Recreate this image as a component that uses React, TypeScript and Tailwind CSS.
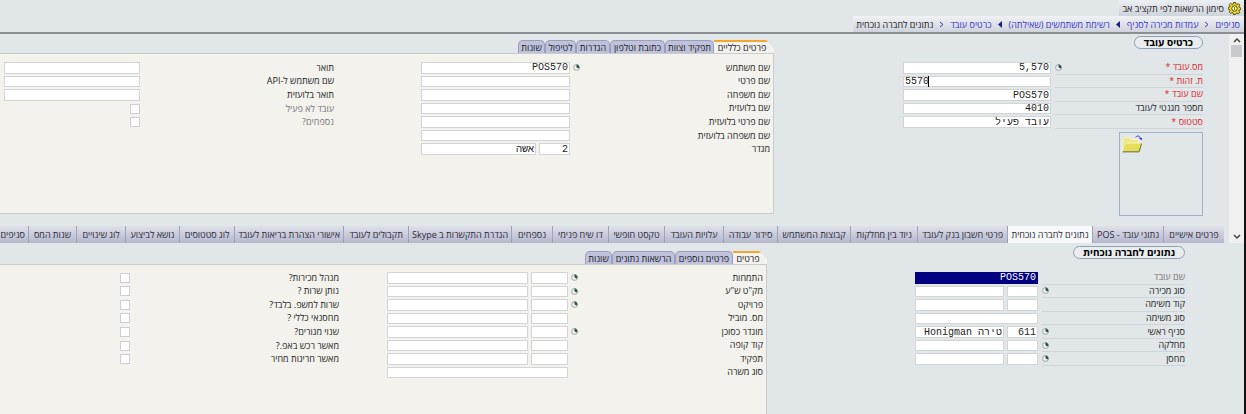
import { useId, type ReactNode } from "react";
import clsx from "clsx";

type Part = { w: string; value?: string; selected?: boolean; ltr?: boolean };
type Row = {
  label: string;
  parts?: Part[];
  lookup?: boolean;
  tone?: "required" | "muted";
};

function LookupIcon() {
  return (
    <svg viewBox="0 0 12 12" className="size-[7px] shrink-0" aria-hidden="true">
      <circle cx="6" cy="6" r="5" fill="#eef3f0" stroke="#8b9794" strokeWidth="1.4" />
      <path d="M6 6V1a5 5 0 0 1 4.6 6.6z" fill="#2c4f46" />
    </svg>
  );
}

function GearIcon() {
  return (
    <svg viewBox="0 0 26 26" className="size-[13px] shrink-0" aria-hidden="true">
      <path
        d="M11 1h4l.8 3.2 2 .8 2.9-1.7 2.8 2.8L21.800 9l.8 2 2.900.8v3.400l-2.900.8-.8 2 1.700 3-2.800 2.700-2.900-1.700-2 .8L15 25h-4l-.8-3.200-2-.8-2.900 1.700-2.800-2.700 1.700-3-.8-2-2.900-.8v-3.400l2.900-.8.8-2-1.700-2.900 2.800-2.800L8.200 5l2-.8z"
        fill="#f2e21c"
        stroke="#2f2b06"
        strokeWidth="1.600"
      />
      <circle cx="13" cy="13" r="5.500" fill="#fbf7b0" stroke="#3a3508" strokeWidth="1.800" />
      <path d="M13 10v6" stroke="#8a7d10" strokeWidth="2" />
    </svg>
  );
}

function FolderIcon() {
  return (
    <svg viewBox="0 0 60 54" className="h-[18px] w-[20px]" aria-hidden="true">
      <path d="M2 48V14l6-7h14l5 6h22v10z" fill="#ece98a" stroke="#fbfae0" strokeWidth="2" />
      <path d="M2 50 13 24h46l-8 26z" fill="#e3de5c" />
      <path d="M13 24h46" stroke="#f8f6c4" strokeWidth="3" />
      <path d="M2 50.500h49l8-25" fill="none" stroke="#6f6b2c" strokeWidth="3" />
      <path d="M41 6c6-5 12-3 15 4" fill="none" stroke="#2b35d8" strokeWidth="3" />
      <path d="M50 9h10v7z" fill="#2b35d8" />
    </svg>
  );
}

function Chevron({ up }: { up?: boolean }) {
  return (
    <svg viewBox="0 0 8 6" className="h-[6px] w-[8px]" aria-hidden="true">
      <path d={up ? "M1 5l3-3 3 3" : "M1 1l3 3 3-3"} fill="none" stroke="#444" strokeWidth="1.500" />
    </svg>
  );
}

function Field({ row, labelW, gap }: { row: Row; labelW: string; gap: string }) {
  const id = useId();
  const ruled = labelW === "w-[148px]" || labelW === "w-[143px]";
  return (
    <div className={clsx("flex items-stretch", gap)}>
      <div
        className={clsx(
          "flex shrink-0 items-center justify-between",
          labelW,
          ruled && "border-b border-[#cfd4d7]",
        )}
      >
        <label
          htmlFor={id}
          className={clsx(
            "whitespace-nowrap text-[9px] leading-[12px] font-medium",
            row.tone === "required" ? "text-[#d8262c]" : row.tone === "muted" ? "text-[#777]" : "text-[#1c1c1c]",
          )}
        >
          {row.label}
        </label>
        {row.lookup && <LookupIcon />}
      </div>
      {row.parts ? (
        <div className="flex gap-[3px] py-px">
          {row.parts.map((p, i) => (
            <div key={i} className={clsx("relative flex", p.w)}>
              <input
                id={i === 0 ? id : undefined}
                aria-label={i === 0 ? undefined : row.label}
                defaultValue={p.value}
                dir={p.ltr ? "ltr" : "rtl"}
                className={clsx(
                  "h-full w-full border px-px font-['Liberation_Mono',monospace] text-[10px] leading-[10px] outline-none",
                  p.selected
                    ? "border-[#000080] bg-[#000080] text-white"
                    : "border-[#d2d4d6] bg-white text-[#222]",
                )}
              />
              {p.ltr && <span className="absolute top-0 left-[25px] h-full w-px bg-black" />}
            </div>
          ))}
        </div>
      ) : (
        <input
          id={id}
          type="checkbox"
          className="size-[10px] self-center appearance-none border border-[#cfcdd3] bg-white"
        />
      )}
    </div>
  );
}

function Fields({ rows, labelW, gap, className }: { rows: Row[]; labelW: string; gap: string; className: string }) {
  return (
    <div className={clsx("grid auto-rows-fr content-stretch", className)}>
      {rows.map((r) => (
        <Field key={r.label} row={r} labelW={labelW} gap={gap} />
      ))}
    </div>
  );
}

function Title({ children }: { children: ReactNode }) {
  return (
    <h2 className="flex h-[13px] items-center justify-center rounded-full border border-[#8fa0b3] bg-[#e9edef] px-[9px] text-[10px] leading-[11px] font-bold whitespace-nowrap text-black">
      {children}
    </h2>
  );
}

function PanelTabs({ tabs }: { tabs: [string, string][] }) {
  return (
    <div className="flex h-[13px] items-stretch">
      {tabs.map(([name, w], i) => (
        <button
          key={name}
          type="button"
          className={clsx(
            "flex items-center justify-center text-[9px] leading-[11px] font-medium whitespace-nowrap text-[#1a1a2a]",
            w,
            i === 0
              ? "border-t-2 border-[#f0a830] bg-[#f3f2ed] pr-1 [clip-path:polygon(0_0,calc(100%-8px)_0,100%_8px,100%_100%,0_100%)]"
              : "rounded-t-[5px] border border-b-0 border-[#9a9dbb] bg-[#bfc2da]",
          )}
        >
          {name}
        </button>
      ))}
    </div>
  );
}

function Crumb({ children }: { children: ReactNode }) {
  return (
    <a href="#" className="text-[#3a34d0]">
      {children}
    </a>
  );
}

function Sep({ solid }: { solid?: boolean }) {
  return (
    <svg viewBox="0 0 5 7" className="h-[7px] w-[5px]" aria-hidden="true">
      {solid ? (
        <path d="M4 0v7L0 3.500z" fill="#1d1d8c" />
      ) : (
        <path d="M1 1l3 2.500L1 6" fill="none" stroke="#3a34b0" />
      )}
    </svg>
  );
}

const full = (w: string, value?: string): Part[] => [{ w, value }];

const cardRows: Row[] = [
  { label: "מס.עובד *", parts: full("w-[148px]", "5,570"), lookup: true, tone: "required" },
  { label: "ת. זהות *", parts: [{ w: "w-[148px]", value: "5570", ltr: true }], tone: "required" },
  { label: "שם עובד *", parts: full("w-[148px]", "POS570"), tone: "required" },
  { label: "מספר מגנטי לעובד", parts: full("w-[148px]", "4010") },
  { label: "סטטוס *", parts: full("w-[148px]", "עובד פעיל"), tone: "required" },
];

const generalRows: Row[] = [
  { label: "שם משתמש", parts: full("w-[149px]", "POS570"), lookup: true },
  { label: "שם פרטי", parts: full("w-[149px]") },
  { label: "שם משפחה", parts: full("w-[149px]") },
  { label: "שם בלועזית", parts: full("w-[149px]") },
  { label: "שם פרטי בלועזית", parts: full("w-[149px]") },
  { label: "שם משפחה בלועזית", parts: full("w-[149px]") },
  { label: "מגדר", parts: [{ w: "w-[31px]", value: "2" }, { w: "w-[115px]", value: "אשה" }] },
];

const extraRows: Row[] = [
  { label: "תואר", parts: full("w-[136px]") },
  { label: "שם משתמש ל-API", parts: full("w-[136px]") },
  { label: "תואר בלועזית", parts: full("w-[136px]") },
  { label: "עובד לא פעיל", tone: "muted" },
  { label: "נספחים?", tone: "muted" },
];

const pair = (a = "", b = ""): Part[] => [
  { w: "w-[31px]", value: a },
  { w: "w-[89px]", value: b },
];

const companyRows: Row[] = [
  { label: "שם עובד", parts: [{ w: "w-[123px]", value: "POS570", selected: true }], tone: "muted" },
  { label: "סוג מכירה", parts: pair(), lookup: true },
  { label: "קוד משימה", parts: pair() },
  { label: "סוג משימה", parts: full("w-[123px]") },
  { label: "סניף ראשי", parts: pair("611", "טירה Honigman"), lookup: true },
  { label: "מחלקה", parts: pair(), lookup: true },
  { label: "מחסן", parts: pair(), lookup: true },
];

const widePair: Part[] = [{ w: "w-[37px]" }, { w: "w-[141px]" }];

const detailRows: Row[] = [
  { label: "התמחות", parts: widePair, lookup: true },
  { label: "מק\"ט ש\"ע", parts: widePair, lookup: true },
  { label: "פרויקט", parts: widePair, lookup: true },
  { label: "מס. מוביל", parts: widePair },
  { label: "מוגדר כסוכן", parts: widePair, lookup: true },
  { label: "קוד קופה", parts: widePair },
  { label: "תפקיד", parts: widePair },
  { label: "סוג משרה", parts: full("w-[181px]") },
];

const flagRows: Row[] = [
  { label: "מנהל מכירות?" },
  { label: "נותן שרות ?" },
  { label: "שרות למשפ. בלבד?" },
  { label: "מחסנאי כללי ?" },
  { label: "שנוי מגורים?" },
  { label: "מאשר רכש באפ.?" },
  { label: "מאשר חריגות מחיר" },
];

const sections: [string, string][] = [
  ["פרטים אישיים", "w-[61px]"],
  ["נתוני עובד - POS", "w-[71px]"],
  ["נתונים לחברה נוכחית", "w-[85px]"],
  ["פרטי חשבון בנק לעובד", "w-[90px]"],
  ["ניוד בין מחלקות", "w-[67px]"],
  ["קבוצות המשתמש", "w-[73px]"],
  ["סידור עבודה", "w-[54px]"],
  ["עלויות העובד", "w-[59px]"],
  ["טקסט חופשי", "w-[56px]"],
  ["דו שיח פנימי", "w-[56px]"],
  ["נספחים", "w-[41px]"],
  ["הגדרת התקשרות ב Skype", "w-[103px]"],
  ["תקבולים לעובד", "w-[65px]"],
  ["אישורי הצהרת בריאות לעובד", "w-[109px]"],
  ["לוג סטטוסים", "w-[55px]"],
  ["נושא לביצוע", "w-[54px]"],
  ["לוג שינויים", "w-[49px]"],
  ["שנות המס", "w-[48px]"],
  ["סניפים", "flex-1"],
];

export default function App() {
  return (
    <div
      dir="rtl"
      className="flex min-h-screen flex-col overflow-hidden border-r-2 border-[#111] bg-[#e1e6e9] font-['Open_Sans','Liberation_Sans',sans-serif]"
    >
      <header className="flex flex-col items-start border-b-2 border-[#8b9095] text-[9px] leading-[15px] whitespace-nowrap">
        <div className="flex h-[16px] items-center gap-[4px] bg-linear-to-b from-[#eceff2] to-[#cfd3db] pr-[3px] pl-[3px] text-[#222]">
          <GearIcon />
          <span>סימון הרשאות לפי תקציב אב</span>
        </div>
        <nav className="flex h-[16px] items-center gap-[6px] bg-linear-to-b from-[#f0f2f5] to-[#cfd3db] pr-1 pl-[3px]">
          <Crumb>סניפים</Crumb>
          <Sep />
          <Crumb>עמדות מכירה לסניף</Crumb>
          <Sep solid />
          <Crumb>רשימת משתמשים (שאילתה)</Crumb>
          <Sep solid />
          <Crumb>כרטיס עובד</Crumb>
          <Sep />
          <span className="text-[#222]">נתונים לחברה נוכחית</span>
        </nav>
      </header>

      <div className="flex">
        <div className="flex w-[15px] shrink-0 flex-col items-center justify-between bg-[#f0f0f1] py-[3px]">
          <div className="flex flex-col items-center gap-[2px]">
            <Chevron up />
            <div className="h-[12px] w-[11px] bg-[#c9cacc]" />
          </div>
          <Chevron />
        </div>

        <div className="flex min-w-0 flex-1 flex-col">
          <div className="flex items-start">
            <section className="flex w-[455px] shrink-0 flex-col items-start pt-[2px] pr-[26px]">
              <Title>כרטיס עובד</Title>
              <Fields rows={cardRows} labelW="w-[148px]" gap="gap-1" className="mt-[12px] h-[68px]" />
              <div dir="ltr" className="mt-[3px] size-[84px] border border-[#9fb1c6] p-[2px]">
                <FolderIcon />
              </div>
            </section>
            <section className="min-w-0 flex-1 pt-[6px]">
              <PanelTabs
                tabs={[
                  ["פרטים כלליים", "w-[60px]"],
                  ["תפקיד וצוות", "w-[49px]"],
                  ["כתובת וטלפון", "w-[55px]"],
                  ["הגדרות", "w-[34px]"],
                  ["לטיפול", "w-[31px]"],
                  ["שונות", "w-[27px]"],
                ]}
              />
              <div className="flex h-[161px] items-start gap-[87px] border border-l-0 border-[#c9cccc] bg-[#f3f2ed] pt-[7px] pr-[3px]">
                <Fields rows={generalRows} labelW="w-[197px]" gap="gap-[3px]" className="h-[95px]" />
                <Fields rows={extraRows} labelW="w-[190px]" gap="gap-1" className="h-[68px]" />
              </div>
            </section>
          </div>

          <nav className="mt-[10px] flex h-[17px] overflow-hidden pr-[5px]">
            {sections.map(([name, w], i) => (
              <button
                key={name}
                type="button"
                className={clsx(
                  "flex items-center border-[#9ea2b6] text-[9px] whitespace-nowrap text-[#2a2a38]",
                  w,
                  w === "flex-1" ? "min-w-0 justify-start pr-[3px]" : "shrink-0 justify-center border-l",
                  i === 2 ? "bg-[#f7f8f9]" : "bg-linear-to-b from-[#dfe1e9] to-[#b4b7cd]",
                )}
              >
                {name}
              </button>
            ))}
          </nav>
        </div>
      </div>

      <div className="flex flex-1">
        <section className="flex w-[477px] shrink-0 flex-col items-start pt-[3px] pr-[59px]">
          <Title>נתונים לחברה נוכחית</Title>
          <Fields rows={companyRows} labelW="w-[143px]" gap="gap-1" className="mt-[12px] h-[95px]" />
        </section>
        <section className="flex min-w-0 flex-1 flex-col pt-[8px]">
          <PanelTabs
            tabs={[
              ["פרטים", "w-[34px]"],
              ["פרטים נוספים", "w-[58px]"],
              ["הרשאות נתונים", "w-[63px]"],
              ["שונות", "w-[27px]"],
            ]}
          />
          <div className="flex flex-1 items-start gap-[48px] border-t border-r border-[#c9cccc] bg-[#f3f2ed] pt-[6px] pr-[3px]">
            <Fields rows={detailRows} labelW="w-[192px]" gap="gap-[3px]" className="h-[108px]" />
            <Fields rows={flagRows} labelW="w-[205px]" gap="gap-1" className="h-[95px]" />
          </div>
        </section>
      </div>
    </div>
  );
}
